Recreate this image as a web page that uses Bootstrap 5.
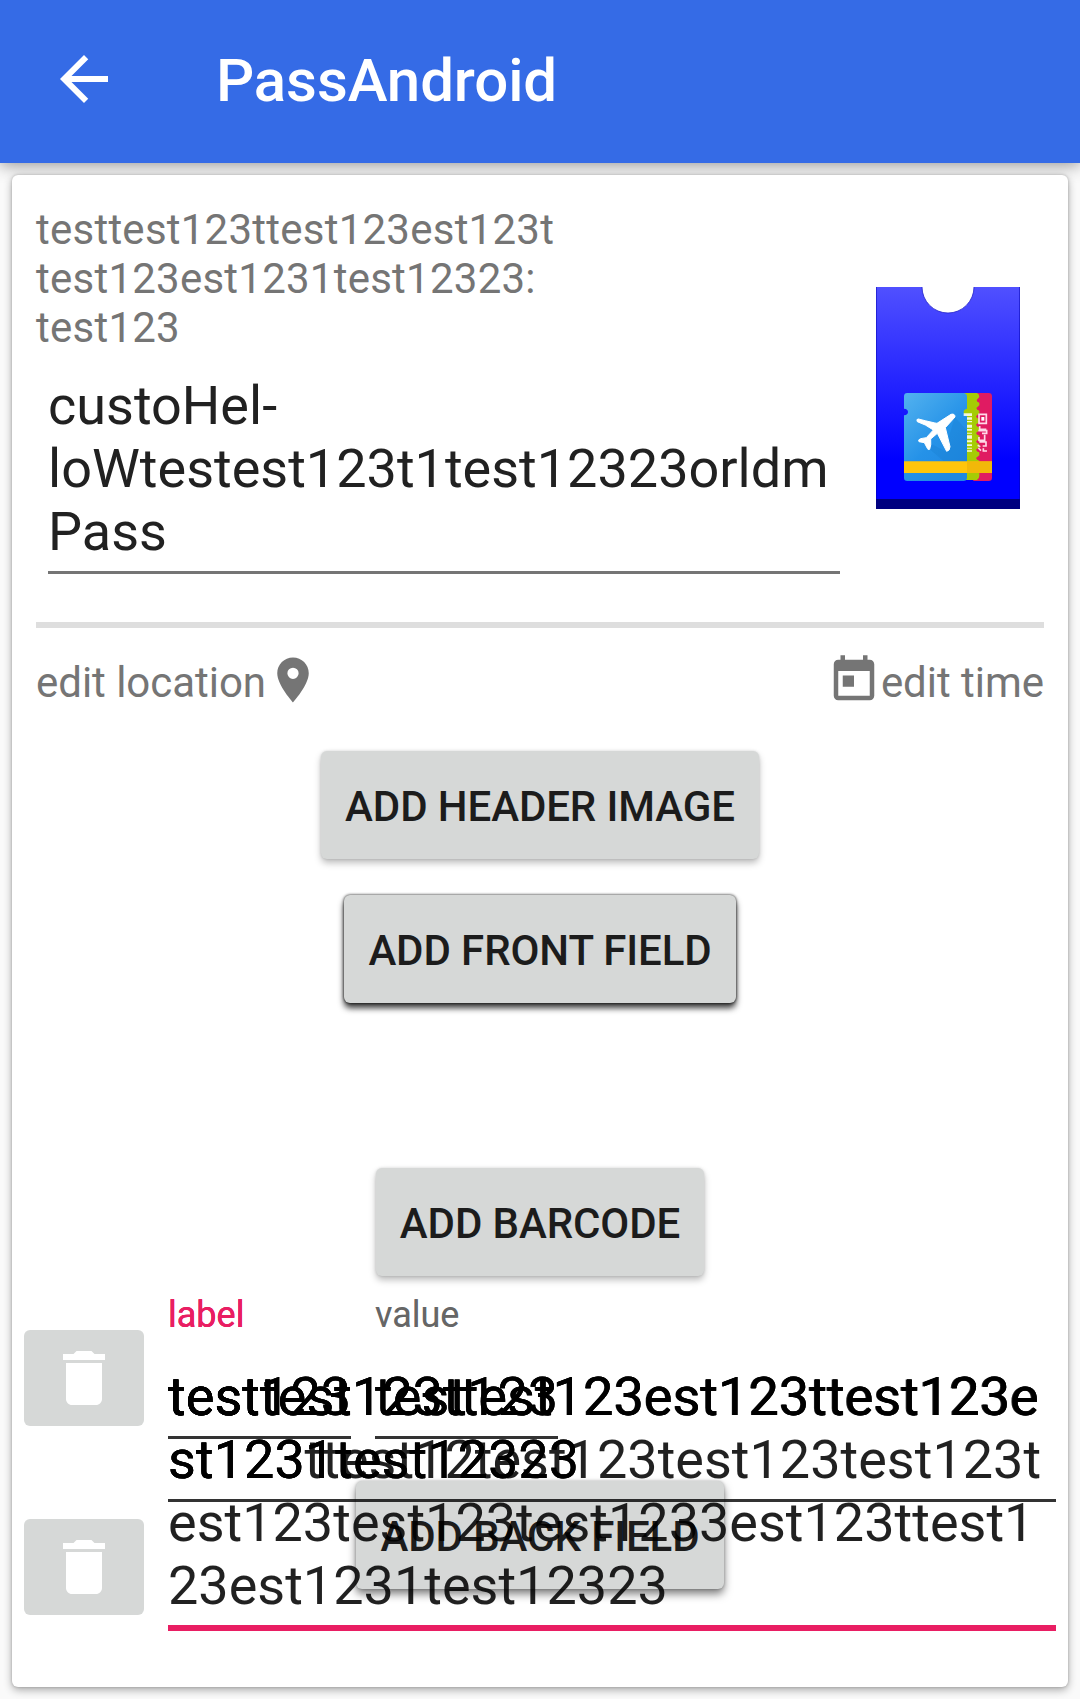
<!DOCTYPE html>
<html lang="en">
<head>
<meta charset="utf-8">
<meta name="viewport" content="width=device-width, initial-scale=1">
<title>PassAndroid</title>
<link rel="stylesheet" href="https://cdn.jsdelivr.net/npm/bootstrap@5.3.0/dist/css/bootstrap.min.css">
<style>
  body { font-family: Roboto, "Liberation Sans", sans-serif; background: #fafafa; color: #212121; overflow: hidden; }
  .app-bar { height: 163px; padding: 0 48px; background: #356be6; box-shadow: 0 2px 16px rgba(0,0,0,.42); }
  .app-icon { margin-top: -6px; }
  .app-title { font-size: 60px; line-height: 70px; font-weight: 500; letter-spacing: -.1px; margin: -1px 0 0 96px; }
  .pass-card { margin: 12px 12px 12px; height: 1512px; border-radius: 6px; box-shadow: 0 3px 9px rgba(0,0,0,.32), 0 0 3px rgba(0,0,0,.22); }
  .pass-head { padding: 30px 24px 0; }
  .pass-text { width: 816px; }
  .summary { font-size: 42px; line-height: 49px; letter-spacing: .24px; color: #757575; margin: 0 0 22px; }
  .pass-name { margin: 0 12px; font-size: 54px; line-height: 63px; padding-bottom: 8px; border-bottom: 3px solid #757575; }
  .pass-icon { margin: 82px 24px 0 0; }
  .rule { height: 6px; margin: 48px 24px 25px; background: #dedede; }
  .meta { padding: 0 24px; font-size: 42px; line-height: 49px; letter-spacing: -.03px; height: 54px; color: #757575; }
  .meta-label { padding-top: 5px; }
  .btn.raised { height: 108px; padding: 3px 24px 0; font-size: 42px; line-height: 49px; letter-spacing: -.1px; font-weight: 500; color: #1c1c1c; background: #d6d8d7; border: 0; border-radius: 6px; box-shadow: 0 4px 7px rgba(0,0,0,.26), 0 0 3px rgba(0,0,0,.14); white-space: nowrap; }
  .btn.raised.strong { box-shadow: 0 5px 6px rgba(0,0,0,.78), 0 0 3px rgba(0,0,0,.9); }
  .btn.raised.medium { box-shadow: 0 5px 8px rgba(0,0,0,.5), 0 0 3px rgba(0,0,0,.25); }
  .actions { margin-top: 44px; gap: 36px; }
  .gap-barcode { margin-top: 129px; }
  .stage { display: grid; grid-template: 411px / 1056px; }
  .stage > * { grid-area: 1 / 1; }
  .back-layer { padding-top: 205px; }
  .trash-layer { padding: 54px 0 0 12px; gap: 93px; }
  .btn.trash { width: 120px; height: 96px; padding: 0; border: 0; border-radius: 6px; background: #d6d8d7; line-height: 0; }
  .field-pair { padding: 18px 0 0 156px; gap: 24px; }
  .field { width: 183px; }
  .float-label { font-size: 36px; line-height: 42px; margin-bottom: 29px; color: #666; text-shadow: 0 0 0 rgba(102,102,102,.4); }
  .float-label.active { color: #e91e63; text-shadow: 0 0 0 #e91e63, 0 0 0 #e91e63; }
  .entry { font-size: 54px; line-height: 63px; color: rgba(0,0,0,.87); white-space: nowrap; }
  .entry.dense { letter-spacing: .04px; text-shadow: 0 0 0 rgba(0,0,0,.87), 0 0 0 rgba(0,0,0,.87); }
  .field .entry { padding-bottom: 8px; border-bottom: 3px solid #333; }
  .wide { padding: 89px 12px 0 156px; }
  .wide .entry { padding-bottom: 8px; border-bottom: 3px solid rgba(0,0,0,.8); }
  .wide .entry.focused { border-bottom: 6px solid #e91e63; }
</style>
<script src="https://cdn.jsdelivr.net/npm/bootstrap@5.3.0/dist/js/bootstrap.bundle.min.js"></script>
</head>
<body>
<header class="app-bar d-flex align-items-center text-white">
  <svg class="app-icon" width="72" height="72" viewBox="0 0 24 24" fill="#fff"><path d="M20 11H7.830l5.590-5.590L12 4l-8 8 8 8 1.410-1.410L7.830 13H20v-2z"/></svg>
  <h1 class="app-title">PassAndroid</h1>
</header>

<main class="pass-card bg-white">
  <section class="pass-head d-flex justify-content-between align-items-start">
    <div class="pass-text">
      <p class="summary">testtest123ttest123est123t<br>test123est1231test12323:<br>test123</p>
      <div class="pass-name">custoHel-<br>loWtestest123t1test12323orldm<br>Pass</div>
    </div>
    <svg class="pass-icon flex-shrink-0" width="144" height="222" viewBox="0 0 144 222">
      <defs>
        <linearGradient id="pocket" x1="0" y1="0" x2="0" y2="1"><stop offset="0" stop-color="#5050ff"/><stop offset=".42" stop-color="#2525ff"/><stop offset=".78" stop-color="#0000ff"/></linearGradient>
        <linearGradient id="sky" x1="0" y1="0" x2=".7" y2="1"><stop offset="0" stop-color="#53b2ef"/><stop offset=".6" stop-color="#2592e8"/><stop offset="1" stop-color="#1f88e2"/></linearGradient>
      </defs>
      <rect width="144" height="222" fill="url(#pocket)"/>
      <path d="M.5 0v212M143.500 0v212" stroke="#0000b0" stroke-opacity=".5"/>
      <rect y="212" width="144" height="10" fill="#000080"/>
      <circle cx="72" cy="0" r="26" fill="#fff" stroke="#2020c8" stroke-width=".8"/>
      <g transform="translate(-26 -17) scale(.33333)">
        <path d="M370 369h46q10 0 10 10v244q0 10-10 10h-46z" fill="#e01b62"/>
        <path d="M335 369h46q7 3 7 12l-8 9q0 7 8 8v8l-9 8q1 7 9 8v8l-10 9q2 7 10 8v8l-10 9q2 7 10 8v9l-10 8q2 7 10 8v9l-10 8q2 7 10 8v9l-10 8q2 7 10 8v9l-10 8q2 7 10 8v45q0 9-7 13h-46z" fill="#a5cc05"/>
        <path d="M172 369h170q9 2 9 11v36q-10 2-10 10t10 11v186q-1 10-10 10H172q-10 0-10-10V436q12-1 12-10t-12-10v-37q0-10 10-10z" fill="url(#sky)"/>
        <path d="M314 440l37 42v92h-70l-52-45 11-9 45 24z" fill="#1477c8" fill-opacity=".25"/>
        <path d="M162 574h264v35H162z" fill="#ffc50b"/>
        <path d="M351 574h75v35h-75z" fill="#e9af08" fill-opacity=".6"/>
        <path d="M205 447q48 12 56 13l42-27q12-3 12 8l-29 32 14 57q0 12-10 14l-28-54-20 17q2 19-3 31-5 3-7-3l-9-17-16-3q-4-6 5-9l17-3 21-23q-23-17-48-25-4-8 3-8z" fill="#fff" stroke="#fff" stroke-width="3" stroke-linejoin="round"/>
        <path d="M341 430h25v8h-25zM351 442h15v7h-15zM351 453h15v4h-15zM351 464h15v9h-15zM351 477h15v5h-15zM351 488h15v3h-15zM351 496h15v10h-15zM351 511h15v6h-15zM351 523h15v5h-15zM351 533h15v3h-15zM351 541h15v4h-15z" fill="#fff" fill-opacity=".85"/>
        <path d="M387 433h22v27h-22zM389 468v10h20M385 482h25v8h-14M404 494v17h-17v-10M388 516h20v12h-10M385 534l8 8M400 535v8h11M383 526l8 4" fill="none" stroke="#ffd9e8" stroke-width="5"/>
        <path d="M394 441h9v11h-9z" fill="#fff"/>
      </g>
    </svg>
  </section>

  <div class="rule"></div>

  <section class="meta d-flex justify-content-between">
    <div class="d-flex"><span class="meta-label">edit location</span>
      <svg width="54" height="54" viewBox="0 0 24 24" fill="#757575"><path d="M12 2C8.130 2 5 5.130 5 9c0 5.250 7 13 7 13s7-7.750 7-13c0-3.870-3.130-7-7-7zm0 9.500a2.500 2.500 0 0 1 0-5 2.500 2.500 0 0 1 0 5z"/></svg>
    </div>
    <div class="d-flex">
      <svg width="54" height="54" viewBox="0 0 24 24" fill="#757575"><path d="M19 3h-1V1h-2v2H8V1H6v2H5c-1.110 0-1.990.9-1.990 2L3 19c0 1.100.89 2 2 2h14c1.100 0 2-.9 2-2V5c0-1.100-.9-2-2-2zm0 16H5V8h14v11zM7 10h5v5H7z"/></svg>
      <span class="meta-label">edit time</span></div>
  </section>

  <section class="actions d-flex flex-column align-items-center">
    <button class="btn raised">ADD HEADER IMAGE</button>
    <button class="btn raised strong">ADD FRONT FIELD</button>
    <button class="btn raised gap-barcode">ADD BARCODE</button>
  </section>

  <section class="stage">
    <div class="back-layer text-center"><button class="btn raised medium">ADD BACK FIELD</button></div>
    <div class="trash-layer d-flex flex-column">
      <button class="btn trash" aria-label="Delete"><svg width="72" height="72" viewBox="0 0 24 24" fill="#fff"><path d="M6 19c0 1.100.9 2 2 2h8c1.100 0 2-.9 2-2V7H6v12zM19 4h-3.500l-1-1h-5l-1 1H5v2h14V4z"/></svg></button>
      <button class="btn trash" aria-label="Delete"><svg width="72" height="72" viewBox="0 0 24 24" fill="#fff"><path d="M6 19c0 1.100.9 2 2 2h8c1.100 0 2-.9 2-2V7H6v12zM19 4h-3.500l-1-1h-5l-1 1H5v2h14V4z"/></svg></button>
    </div>
    <div class="wide"><div class="entry focused">testtest123ttest123est123ttest123e<br>st123ttest12test123test123test123t<br>est123test123test1233est123ttest1<br>23est1231test12323</div></div>
    <div class="wide"><div class="entry dense">testtest123ttest123est123ttest123e<br>st1231test12323</div></div>
    <div class="field-pair d-flex">
      <div class="field"><div class="float-label active">label</div><div class="entry dense">test123</div></div>
      <div class="field"><div class="float-label">value</div><div class="entry dense">test123</div></div>
    </div>
  </section>
</main>
</body>
</html>
